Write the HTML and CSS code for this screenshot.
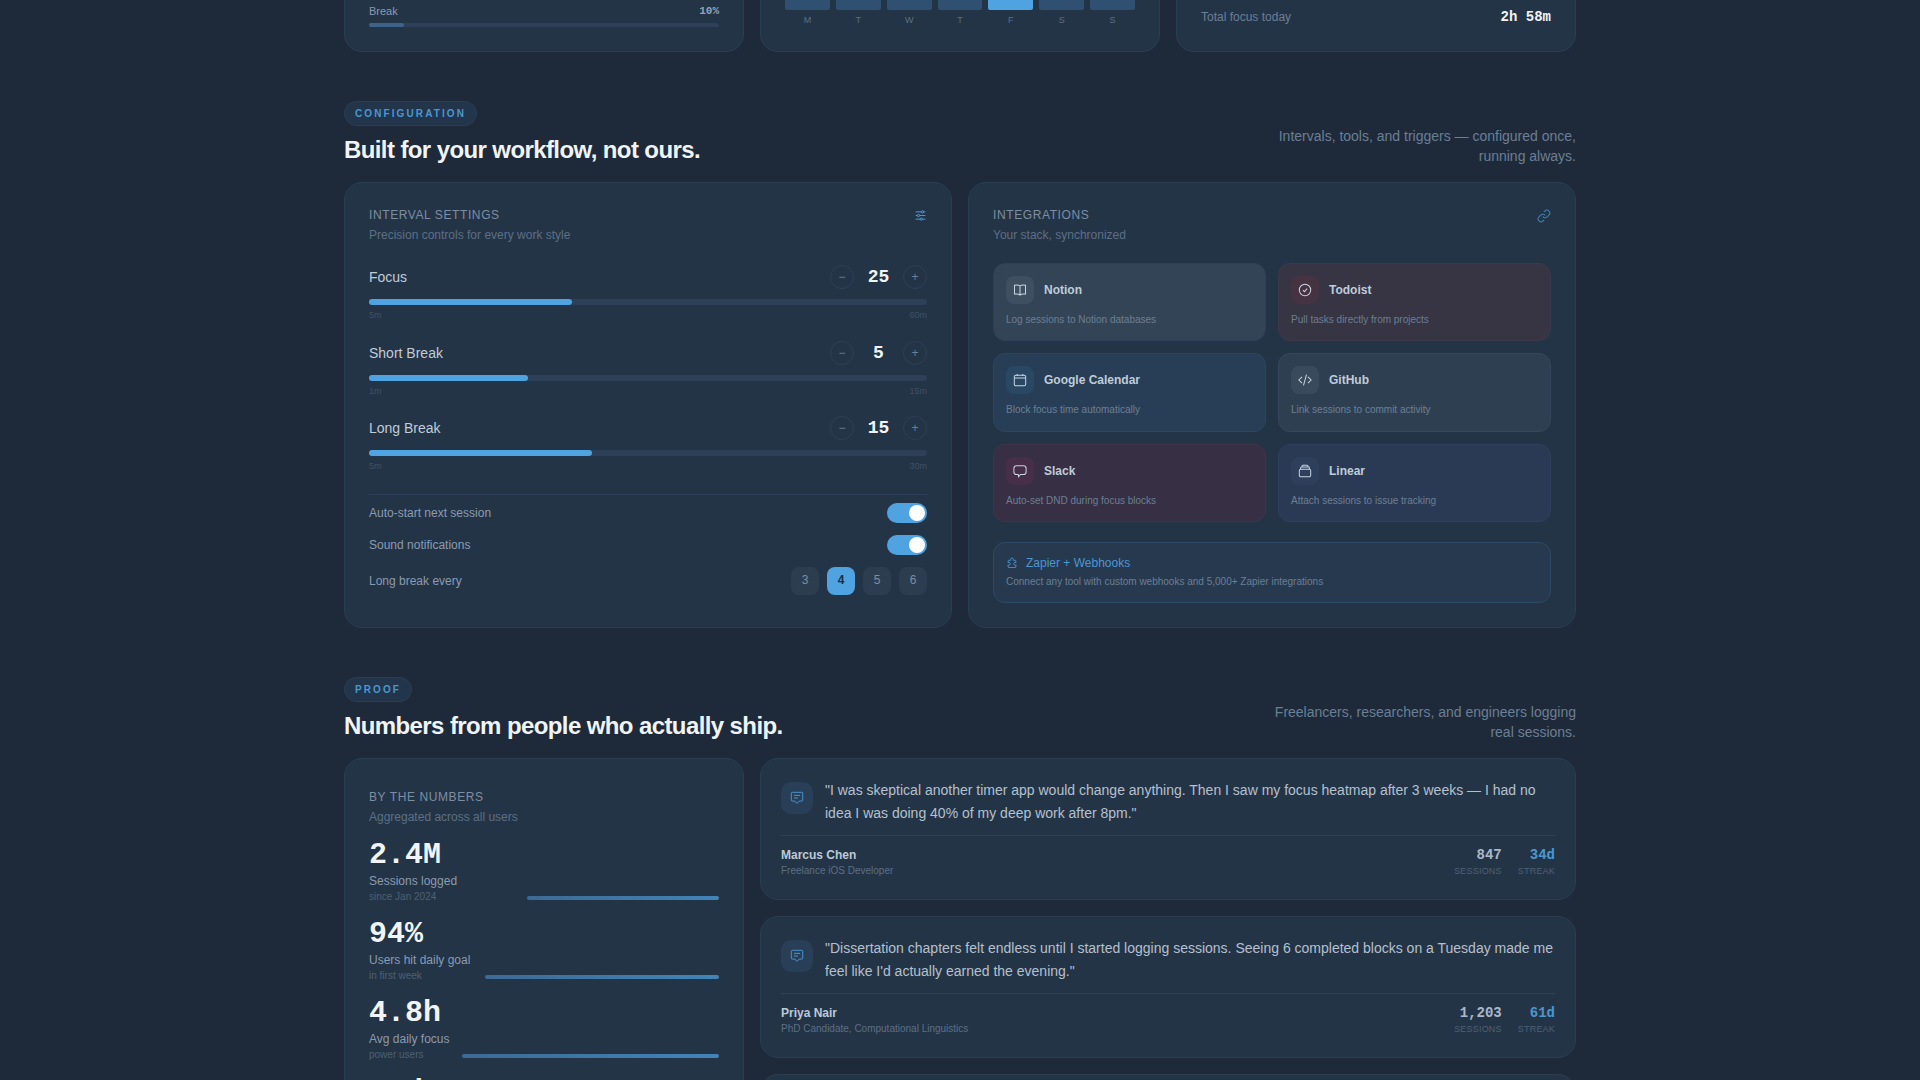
FILE: index.html
```html
<!DOCTYPE html>
<html lang="en">
<head>
    <meta charset="UTF-8">
    <meta name="viewport" content="width=device-width, initial-scale=1.0">
    <title>Focus timer</title>
    <link rel="stylesheet" href="styles.css">
</head>
<body>
    <main class="page">
        <!-- previous section, only its lower edge is in view -->
        <div class="top-row">
            <div class="card top-card">
                <div class="split-row"><span class="split-name">Break</span><span class="split-pct">10%</span></div>
                <div class="split-track"><div class="split-fill" style="width: 10%"></div></div>
            </div>
            <div class="card top-card">
                <div class="week-bars">
                    <div class="week-day"><div class="week-bar"></div><span>M</span></div>
                    <div class="week-day"><div class="week-bar"></div><span>T</span></div>
                    <div class="week-day"><div class="week-bar"></div><span>W</span></div>
                    <div class="week-day"><div class="week-bar"></div><span>T</span></div>
                    <div class="week-day"><div class="week-bar today"></div><span>F</span></div>
                    <div class="week-day"><div class="week-bar"></div><span>S</span></div>
                    <div class="week-day"><div class="week-bar"></div><span>S</span></div>
                </div>
            </div>
            <div class="card top-card">
                <div class="total-row"><span class="total-name">Total focus today</span><span class="total-value">2h 58m</span></div>
            </div>
        </div>

        <section class="section">
            <div class="section-head">
                <div>
                    <span class="badge">CONFIGURATION</span>
                    <h2>Built for your workflow, not ours.</h2>
                </div>
                <p class="section-sub">Intervals, tools, and triggers — configured once, running always.</p>
            </div>
            <div class="config-grid">
                <div class="card">
                    <div class="card-head">
                        <div>
                            <div class="card-title">INTERVAL SETTINGS</div>
                            <div class="card-sub">Precision controls for every work style</div>
                        </div>
                        <svg class="head-icon" viewBox="0 0 16 16"><path d="M2 3.5h12M2 8h12M2 12.5h12"/><circle class="knob" cx="10.5" cy="3.5" r="1.4"/><circle class="knob" cx="5.5" cy="8" r="1.4"/><circle class="knob" cx="9" cy="12.5" r="1.4"/></svg>
                    </div>

                    <div class="interval">
                        <div class="interval-top">
                            <span class="interval-name">Focus</span>
                            <div class="stepper"><span class="step-btn">−</span><span class="step-value">25</span><span class="step-btn">+</span></div>
                        </div>
                        <div class="range-track"><div class="range-fill" style="width: 36.4%"></div></div>
                        <div class="range-ends"><span>5m</span><span>60m</span></div>
                    </div>
                    <div class="interval">
                        <div class="interval-top">
                            <span class="interval-name">Short Break</span>
                            <div class="stepper"><span class="step-btn">−</span><span class="step-value">5</span><span class="step-btn">+</span></div>
                        </div>
                        <div class="range-track"><div class="range-fill" style="width: 28.5%"></div></div>
                        <div class="range-ends"><span>1m</span><span>15m</span></div>
                    </div>
                    <div class="interval">
                        <div class="interval-top">
                            <span class="interval-name">Long Break</span>
                            <div class="stepper"><span class="step-btn">−</span><span class="step-value">15</span><span class="step-btn">+</span></div>
                        </div>
                        <div class="range-track"><div class="range-fill" style="width: 40%"></div></div>
                        <div class="range-ends"><span>5m</span><span>30m</span></div>
                    </div>

                    <div class="options">
                        <div class="option-row"><span>Auto-start next session</span><div class="toggle"><div class="toggle-dot"></div></div></div>
                        <div class="option-row"><span>Sound notifications</span><div class="toggle"><div class="toggle-dot"></div></div></div>
                        <div class="option-row chips-row">
                            <span>Long break every</span>
                            <div class="chips"><span class="chip">3</span><span class="chip active">4</span><span class="chip">5</span><span class="chip">6</span></div>
                        </div>
                    </div>
                </div>

                <div class="card">
                    <div class="card-head">
                        <div>
                            <div class="card-title">INTEGRATIONS</div>
                            <div class="card-sub">Your stack, synchronized</div>
                        </div>
                        <svg class="head-icon dim" viewBox="0 0 24 24"><path d="M10 13a5 5 0 0 0 7.54.54l3-3a5 5 0 0 0-7.07-7.07l-1.72 1.71"/><path d="M14 11a5 5 0 0 0-7.54-.54l-3 3a5 5 0 0 0 7.07 7.07l1.71-1.71"/></svg>
                    </div>

                    <div class="tiles">
                        <div class="tile tile-notion">
                            <div class="tile-top">
                                <span class="tile-icon"><svg viewBox="0 0 16 16"><path d="M8 3.2C6.8 2.4 4.4 2.2 1.7 2.5v10.2c2.7-.3 5.1-.1 6.3.7 1.2-.8 3.6-1 6.3-.7V2.5c-2.7-.3-5.1-.1-6.3.7zM8 3.2v11.4"/></svg></span>
                                <span class="tile-name">Notion</span>
                            </div>
                            <div class="tile-desc">Log sessions to Notion databases</div>
                        </div>
                        <div class="tile tile-todoist">
                            <div class="tile-top">
                                <span class="tile-icon"><svg viewBox="0 0 16 16"><circle cx="8" cy="8" r="6.5"/><path d="M5.6 8.2l1.7 1.7 3.2-3.5"/></svg></span>
                                <span class="tile-name">Todoist</span>
                            </div>
                            <div class="tile-desc">Pull tasks directly from projects</div>
                        </div>
                        <div class="tile tile-gcal">
                            <div class="tile-top">
                                <span class="tile-icon"><svg viewBox="0 0 16 16"><rect x="1.5" y="2.6" width="13" height="12" rx="1.8"/><path d="M1.5 5.8h13M4.8 1v2.4M11.2 1v2.4"/></svg></span>
                                <span class="tile-name">Google Calendar</span>
                            </div>
                            <div class="tile-desc">Block focus time automatically</div>
                        </div>
                        <div class="tile tile-github">
                            <div class="tile-top">
                                <span class="tile-icon"><svg viewBox="0 0 16 16"><path d="M4.6 4.4L1 8l3.6 3.6M11.4 4.4L15 8l-3.6 3.6M9.7 1.8L6.3 14.2"/></svg></span>
                                <span class="tile-name">GitHub</span>
                            </div>
                            <div class="tile-desc">Link sessions to commit activity</div>
                        </div>
                        <div class="tile tile-slack">
                            <div class="tile-top">
                                <span class="tile-icon"><svg viewBox="0 0 16 16"><path d="M4 2h8a3 3 0 0 1 3 3v4a3 3 0 0 1-3 3H8.4L6.4 14.6 6 12H4a3 3 0 0 1-3-3V5a3 3 0 0 1 3-3z"/></svg></span>
                                <span class="tile-name">Slack</span>
                            </div>
                            <div class="tile-desc">Auto-set DND during focus blocks</div>
                        </div>
                        <div class="tile tile-linear">
                            <div class="tile-top">
                                <span class="tile-icon"><svg viewBox="0 0 16 16"><rect x="1.5" y="6" width="13" height="8.5" rx="1.6"/><path d="M3 6V4.4a.9.9 0 0 1 .9-.9h8.2a.9.9 0 0 1 .9.9V6M4.6 3.5V2.4a.9.9 0 0 1 .9-.9h5a.9.9 0 0 1 .9.9v1.1"/></svg></span>
                                <span class="tile-name">Linear</span>
                            </div>
                            <div class="tile-desc">Attach sessions to issue tracking</div>
                        </div>
                    </div>

                    <div class="zapier">
                        <div class="zapier-top">
                            <svg viewBox="0 0 16 16"><path d="M6.2 3.2a1.8 1.8 0 1 1 3.6 0c0 .5-.2.8-.3 1.2h3.3l.6 3c-.4-.2-.8-.3-1.2-.3a1.9 1.9 0 0 0 0 3.8c.5 0 .9-.1 1.3-.3l-.7 3.4H3.2l-.7-3.4c.4.2.8.3 1.3.3a1.9 1.9 0 0 0 0-3.8c-.4 0-.8.1-1.2.3l.6-3h3.3c-.1-.4-.3-.7-.3-1.2z"/></svg>
                            <span>Zapier + Webhooks</span>
                        </div>
                        <div class="zapier-desc">Connect any tool with custom webhooks and 5,000+ Zapier integrations</div>
                    </div>
                </div>
            </div>
        </section>

        <section class="section">
            <div class="section-head">
                <div>
                    <span class="badge">PROOF</span>
                    <h2>Numbers from people who actually ship.</h2>
                </div>
                <p class="section-sub">Freelancers, researchers, and engineers logging real sessions.</p>
            </div>
            <div class="proof-grid">
                <div class="card numbers-card">
                    <div class="card-title">BY THE NUMBERS</div>
                    <div class="card-sub">Aggregated across all users</div>
                    <div class="stats">
                        <div class="stat">
                            <div class="stat-text">
                                <div class="stat-value">2.4M</div>
                                <div class="stat-label">Sessions logged</div>
                                <div class="stat-note">since Jan 2024</div>
                            </div>
                            <div class="stat-bar" style="width: 55%"></div>
                        </div>
                        <div class="stat">
                            <div class="stat-text">
                                <div class="stat-value">94%</div>
                                <div class="stat-label">Users hit daily goal</div>
                                <div class="stat-note">in first week</div>
                            </div>
                            <div class="stat-bar" style="width: 67%"></div>
                        </div>
                        <div class="stat">
                            <div class="stat-text">
                                <div class="stat-value">4.8h</div>
                                <div class="stat-label">Avg daily focus</div>
                                <div class="stat-note">power users</div>
                            </div>
                            <div class="stat-bar" style="width: 73.5%"></div>
                        </div>
                        <div class="stat">
                            <div class="stat-text">
                                <div class="stat-value">31d</div>
                            </div>
                        </div>
                    </div>
                </div>

                <div class="quotes">
                    <div class="card quote">
                        <div class="quote-top">
                            <span class="quote-icon"><svg viewBox="0 0 16 16"><path d="M2.5 1.5h11a1 1 0 0 1 1 1v8a1 1 0 0 1-1 1h-3L8 14.2 5.5 11.5h-3a1 1 0 0 1-1-1v-8a1 1 0 0 1 1-1z"/><path d="M4.5 5h7M4.5 8h4.5"/></svg></span>
                            <p>"I was skeptical another timer app would change anything. Then I saw my focus heatmap after 3 weeks — I had no idea I was doing 40% of my deep work after 8pm."</p>
                        </div>
                        <div class="quote-foot">
                            <div>
                                <div class="quote-name">Marcus Chen</div>
                                <div class="quote-role">Freelance iOS Developer</div>
                            </div>
                            <div class="quote-stats">
                                <div class="quote-stat"><div class="qs-value">847</div><div class="qs-label">SESSIONS</div></div>
                                <div class="quote-stat"><div class="qs-value blue">34d</div><div class="qs-label">STREAK</div></div>
                            </div>
                        </div>
                    </div>
                    <div class="card quote">
                        <div class="quote-top">
                            <span class="quote-icon"><svg viewBox="0 0 16 16"><path d="M2.5 1.5h11a1 1 0 0 1 1 1v8a1 1 0 0 1-1 1h-3L8 14.2 5.5 11.5h-3a1 1 0 0 1-1-1v-8a1 1 0 0 1 1-1z"/><path d="M4.5 5h7M4.5 8h4.5"/></svg></span>
                            <p>"Dissertation chapters felt endless until I started logging sessions. Seeing 6 completed blocks on a Tuesday made me feel like I'd actually earned the evening."</p>
                        </div>
                        <div class="quote-foot">
                            <div>
                                <div class="quote-name">Priya Nair</div>
                                <div class="quote-role">PhD Candidate, Computational Linguistics</div>
                            </div>
                            <div class="quote-stats">
                                <div class="quote-stat"><div class="qs-value">1,203</div><div class="qs-label">SESSIONS</div></div>
                                <div class="quote-stat"><div class="qs-value blue">61d</div><div class="qs-label">STREAK</div></div>
                            </div>
                        </div>
                    </div>
                    <div class="card quote"></div>
                </div>
            </div>
        </section>
    </main>
</body>
</html>
```

FILE: styles.css
```css
html, body {
    height: 1080px;
    overflow: hidden;
}

body {
    margin: 0;
    background-color: #1e2a3a;
    font-family: 'Liberation Sans', Arial, sans-serif;
    color: #e8eef4;
}

.page {
    width: 1232px;
    margin: 0 auto;
}

.card {
    background-color: #243447;
    border: 1px solid #2c3d52;
    border-radius: 18px;
    padding: 24px;
}

/* top row, cut by the window edge */
.top-row {
    display: grid;
    grid-template-columns: repeat(3, 1fr);
    gap: 16px;
    height: 52px;
}

.top-card {
    border-top: none;
    border-radius: 0 0 18px 18px;
    padding-top: 0;
    display: flex;
    flex-direction: column;
    justify-content: flex-end;
    overflow: hidden;
}

.split-row {
    display: flex;
    justify-content: space-between;
    align-items: center;
    margin-bottom: 5px;
    font-size: 11px;
    line-height: 13px;
}

.split-name {
    color: #8a9bb0;
}

.split-pct {
    font-family: 'Liberation Mono', monospace;
    color: #93a3b5;
    font-weight: bold;
    font-size: 11px;
}

.split-track {
    height: 4px;
    border-radius: 2px;
    background-color: #2e4057;
}

.split-fill {
    height: 100%;
    border-radius: 2px;
    background-color: #3d6488;
}

.week-bars {
    display: flex;
    gap: 6px;
    margin-bottom: 2px;
}

.week-day {
    flex: 1;
    text-align: center;
    font-size: 9px;
    line-height: 10px;
    color: #5c6f84;
}

.week-bar {
    height: 10px;
    margin-bottom: 5px;
    border-radius: 0 0 2px 2px;
    background-color: #2f5070;
}

.week-bar.today {
    background-color: #4fa3e0;
}

.total-row {
    display: flex;
    justify-content: space-between;
    align-items: center;
    margin-bottom: 2px;
}

.total-name {
    font-size: 12px;
    color: #6b7f94;
}

.total-value {
    font-family: 'Liberation Mono', monospace;
    font-size: 14px;
    font-weight: bold;
    color: #f0f4f8;
}

/* section heads */
.section {
    margin-top: 49px;
}

.section-head {
    display: flex;
    justify-content: space-between;
    align-items: flex-end;
    margin-bottom: 16px;
}

.badge {
    display: inline-block;
    height: 25px;
    line-height: 23px;
    box-sizing: border-box;
    padding: 0 10px;
    border: 1px solid #2c3d52;
    border-radius: 13px;
    background-color: #22354b;
    color: #4a97d0;
    font-size: 10px;
    font-weight: bold;
    letter-spacing: 2.1px;
}

h2 {
    margin: 8px 0 0;
    font-size: 24px;
    line-height: 32px;
    font-weight: bold;
    letter-spacing: -0.6px;
    color: #f0f4f8;
}

.section-sub {
    margin: 0;
    width: 320px;
    text-align: right;
    font-size: 14px;
    line-height: 20px;
    color: #6b7f94;
}

.config-grid {
    display: grid;
    grid-template-columns: 1fr 1fr;
    gap: 16px;
}

.card-head {
    display: flex;
    justify-content: space-between;
    align-items: flex-start;
    margin-bottom: 20px;
}

.card-title {
    font-size: 12px;
    line-height: 16px;
    letter-spacing: 0.6px;
    color: #7d8ea2;
}

.card-sub {
    margin-top: 4px;
    font-size: 12px;
    line-height: 16px;
    color: #5c6f84;
}

.head-icon {
    width: 13px;
    height: 13px;
    margin-top: 2px;
    fill: none;
    stroke: #4fa3e0;
    stroke-width: 1.1;
}

.head-icon.dim {
    width: 14px;
    height: 14px;
    stroke: #3f7eae;
    stroke-width: 1.9;
}

.head-icon .knob {
    fill: #243447;
}

/* interval sliders */
.card-head + .interval {
    margin-top: 22px;
}

.interval {
    margin-bottom: 20.5px;
}

.interval-top {
    display: flex;
    justify-content: space-between;
    align-items: center;
    height: 24px;
    margin-bottom: 10px;
}

.interval-name {
    font-size: 14px;
    color: #bfccd9;
}

.stepper {
    display: flex;
    align-items: center;
    gap: 8px;
}

.step-btn {
    width: 24px;
    height: 24px;
    box-sizing: border-box;
    border: 1px solid #2e4057;
    border-radius: 50%;
    display: flex;
    align-items: center;
    justify-content: center;
    font-size: 12px;
    color: #6b7f94;
}

.step-value {
    width: 33px;
    text-align: center;
    font-family: 'Liberation Mono', monospace;
    font-size: 18px;
    font-weight: bold;
    color: #f0f4f8;
}

.range-track {
    height: 6px;
    border-radius: 3px;
    background-color: #2e4057;
}

.range-fill {
    height: 100%;
    border-radius: 3px;
    background-color: #4fa3e0;
}

.range-ends {
    display: flex;
    justify-content: space-between;
    margin-top: 5px;
    font-size: 9px;
    line-height: 10px;
    color: #3f5166;
}

.options {
    margin-top: 23px;
    padding-top: 8px;
    border-top: 1px solid #2e4057;
    font-size: 12px;
    color: #8a9bb0;
}

.option-row {
    display: flex;
    justify-content: space-between;
    align-items: center;
    height: 20px;
    margin-bottom: 12px;
}

.chips-row {
    height: 28px;
    margin-bottom: 0;
}

.toggle {
    width: 40px;
    height: 20px;
    box-sizing: border-box;
    padding: 2px;
    border-radius: 10px;
    background-color: #4fa3e0;
    display: flex;
    justify-content: flex-end;
}

.toggle-dot {
    width: 16px;
    height: 16px;
    border-radius: 50%;
    background-color: #ffffff;
}

.chips {
    display: flex;
    gap: 8px;
}

.chip {
    width: 28px;
    height: 28px;
    box-sizing: border-box;
    padding-bottom: 2px;
    border-radius: 8px;
    display: flex;
    align-items: center;
    justify-content: center;
    background-color: #2d3d50;
    font-size: 12px;
    color: #7d8ea2;
}

.chip.active {
    background-color: #4fa3e0;
    color: #1e2a3a;
    font-weight: bold;
}

/* integrations */
.tiles {
    display: grid;
    grid-template-columns: 1fr 1fr;
    gap: 12px;
}

.tile {
    height: 78.33px;
    box-sizing: border-box;
    padding: 12px;
    border: 1px solid #2e4057;
    border-radius: 12px;
}

.tile-top {
    display: flex;
    align-items: center;
    gap: 10px;
    margin-bottom: 9px;
}

.tile-icon {
    width: 28px;
    height: 28px;
    border-radius: 8px;
    display: flex;
    align-items: center;
    justify-content: center;
}

.tile-icon svg {
    width: 14px;
    height: 14px;
    fill: none;
    stroke: #c8d4e0;
    stroke-width: 1.15;
}

.tile-name {
    font-size: 12px;
    font-weight: bold;
    color: #bfccd9;
}

.tile-desc {
    font-size: 10px;
    line-height: 14px;
    color: #6b7f94;
}

.tile-notion { background-color: #344457; }
.tile-notion .tile-icon { background-color: #3f4f62; }
.tile-todoist { background-color: #373443; border-color: #3e3949; }
.tile-todoist .tile-icon { background-color: #453341; }
.tile-gcal { background-color: #283e57; border-color: #2c4660; }
.tile-gcal .tile-icon { background-color: #2a4864; }
.tile-github { background-color: #2f3f52; border-color: #37475b; }
.tile-github .tile-icon { background-color: #3a4a5d; }
.tile-slack { background-color: #372f43; border-color: #40344b; }
.tile-slack .tile-icon { background-color: #472e49; }
.tile-linear { background-color: #2a3a55; border-color: #2f405d; }
.tile-linear .tile-icon { background-color: #2e3f5c; }

.zapier {
    height: 61px;
    box-sizing: border-box;
    margin-top: 20px;
    padding: 12px;
    border: 1px solid #2d4a66;
    border-radius: 12px;
    background-color: #27394f;
}

.zapier-top {
    display: flex;
    align-items: center;
    gap: 8px;
    margin-bottom: 4px;
    font-size: 12px;
    line-height: 16px;
    color: #4a97d0;
}

.zapier-top svg {
    width: 12px;
    height: 12px;
    fill: none;
    stroke: #4a97d0;
    stroke-width: 1.1;
}

.zapier-desc {
    font-size: 10px;
    line-height: 14px;
    color: #6b7f94;
}

/* proof */
.proof-grid {
    display: grid;
    grid-template-columns: 400px 1fr;
    gap: 16px;
}

.numbers-card {
    padding-top: 30px;
}

.stats {
    margin-top: 12px;
}

.stat {
    display: flex;
    justify-content: space-between;
    align-items: flex-end;
    height: 79px;
    box-sizing: border-box;
    padding-bottom: 12px;
}

.stat-value {
    font-family: 'Liberation Mono', monospace;
    font-size: 30px;
    line-height: 36px;
    font-weight: bold;
    color: #f0f4f8;
    white-space: nowrap;
}

.stat-label {
    font-size: 12px;
    line-height: 16px;
    color: #8a9bb0;
    white-space: nowrap;
}

.stat-note {
    margin-top: 1px;
    font-size: 10px;
    line-height: 14px;
    color: #4d6075;
    white-space: nowrap;
}

.stat-bar {
    height: 4px;
    margin-bottom: 4px;
    border-radius: 2px;
    background: linear-gradient(90deg, #3d6a94, #4184b8);
}

.stat:last-child {
    align-items: flex-start;
}

.quotes {
    display: flex;
    flex-direction: column;
    gap: 16px;
}

.quote {
    height: 142px;
    flex-shrink: 0;
    box-sizing: border-box;
    padding: 20px;
}

.quote-top {
    display: flex;
    gap: 12px;
    padding-bottom: 10px;
    border-bottom: 1px solid #2e4057;
}

.quote-icon {
    width: 32px;
    height: 32px;
    flex-shrink: 0;
    margin-top: 3px;
    border-radius: 10px;
    background-color: #293f57;
    display: flex;
    align-items: center;
    justify-content: center;
}

.quote-icon svg {
    width: 14px;
    height: 14px;
    fill: none;
    stroke: #4a97d0;
    stroke-width: 1.1;
}

.quote-top p {
    margin: 0;
    font-size: 14px;
    line-height: 23px;
    color: #b4c0cd;
}

.quote-foot {
    display: flex;
    justify-content: space-between;
    align-items: center;
    margin-top: 11px;
}

.quote-name {
    font-size: 12px;
    line-height: 16px;
    font-weight: bold;
    color: #bcc9d6;
}

.quote-role {
    margin-top: 1px;
    font-size: 10px;
    line-height: 14px;
    color: #5c6f84;
}

.quote-stats {
    display: flex;
    gap: 16px;
}

.quote-stat {
    text-align: right;
}

.qs-value {
    font-family: 'Liberation Mono', monospace;
    font-size: 14px;
    line-height: 16px;
    font-weight: bold;
    color: #a9b8c8;
}

.qs-value.blue {
    color: #4a97d0;
}

.qs-label {
    margin-top: 1px;
    font-size: 9px;
    line-height: 14px;
    letter-spacing: 0.2px;
    color: #4d6075;
}
```
